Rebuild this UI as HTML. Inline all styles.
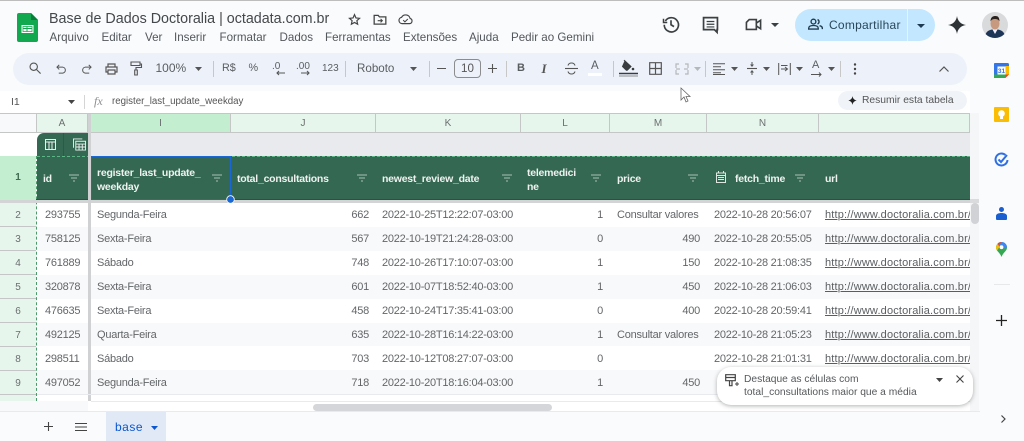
<!DOCTYPE html>
<html lang="pt-BR"><head><meta charset="utf-8"><title>Base de Dados Doctoralia</title>
<style>
*{box-sizing:border-box}
html,body{margin:0;padding:0}
body{width:1024px;height:441px;position:relative;overflow:hidden;background:#f9fbfd;font-family:"Liberation Sans",sans-serif;color:#444746}
.a{position:absolute;white-space:nowrap}
svg{position:absolute;overflow:visible}
.menu{top:29.500px;font-size:11.600px;color:#54575b;line-height:15px}
.tb{top:61px;font-size:11.500px;color:#5a5d60;line-height:15px}
.ch{top:113px;height:20px;background:#e6f6ec;border-right:1px solid #c4c7c5;border-bottom:1px solid #c4c7c5;text-align:center;font-size:10px;line-height:20px;color:#6b6e70}
.rh{left:0;width:36px;background:#e6f6ec;border-bottom:1px solid #c4c7c5;text-align:center;font-size:10px;color:#6b6e70;line-height:26px;height:24px}
.c{font-size:11px;letter-spacing:-.24px;color:#636669;line-height:16px}
.h{font-size:10.500px;letter-spacing:-.24px;font-weight:bold;color:#eef3f0;line-height:14px;top:172px}
.h2{top:165.500px;line-height:14px}
.u{text-decoration:underline;color:#5b5e61;width:145px;overflow:hidden;left:825px;letter-spacing:.17px}
.ri{text-align:right}
</style></head><body>
<div class="a" style="left:0;top:0;width:1024px;height:1px;background:#bdbdbd"></div>

<!-- logo -->
<svg style="left:17px;top:13px" width="21" height="29" viewBox="0 0 21 29"><path d="M2 0H14L21 7V27a2 2 0 0 1-2 2H2a2 2 0 0 1-2-2V2a2 2 0 0 1 2-2z" fill="#11a84f"/><path d="M14 0L21 7H14z" fill="#0b7d3a"/><path d="M4.500 12H16.500V20H4.500z" fill="#fff"/><path d="M10 13.500V18.500M6 15.500H15" stroke="#11a84f" stroke-width="1"/><path d="M6 13.500h9v5H6z" fill="none" stroke="#11a84f" stroke-width=".8"/></svg>

<div class="a" style="left:49px;top:10px;font-size:14.300px;line-height:18px;color:#45484b">Base de Dados Doctoralia | octadata.com.br</div>
<svg style="left:348px;top:13px" width="13" height="13" viewBox="0 0 24 24"><path d="M12 3l2.700 6.100 6.600.700-4.900 4.400 1.400 6.500L12 17.400l-5.800 3.300 1.400-6.500-4.900-4.400 6.600-.700z" fill="none" stroke="#444" stroke-width="2.200"/></svg>
<svg style="left:373px;top:13px" width="14" height="13" viewBox="0 0 24 22"><path d="M2 4h7l2 2.500h11V19H2z" fill="none" stroke="#444" stroke-width="2.200"/><path d="M8 13h8M13 10l3 3-3 3" fill="none" stroke="#444" stroke-width="1.800"/></svg>
<svg style="left:398px;top:13px" width="15" height="12" viewBox="0 0 26 20"><path d="M7 18a5.500 5.500 0 0 1-.8-10.900A8 8 0 0 1 21 9a4.600 4.600 0 0 1-1 9z" fill="none" stroke="#444" stroke-width="2"/><path d="M9 12l3 3 5-5" fill="none" stroke="#444" stroke-width="1.800"/></svg>

<div class="a menu" style="left:49.500px">Arquivo</div>
<div class="a menu" style="left:101.500px">Editar</div>
<div class="a menu" style="left:145px">Ver</div>
<div class="a menu" style="left:174px">Inserir</div>
<div class="a menu" style="left:219.500px">Formatar</div>
<div class="a menu" style="left:279.500px">Dados</div>
<div class="a menu" style="left:325px">Ferramentas</div>
<div class="a menu" style="left:403px">Extensões</div>
<div class="a menu" style="left:469px">Ajuda</div>
<div class="a menu" style="left:511px">Pedir ao Gemini</div>

<!-- top right -->
<svg style="left:662px;top:15px" width="18" height="18" viewBox="0 0 24 24" fill="none" stroke="#3c4043" stroke-width="2.200"><path d="M4.500 8A9.500 9.500 0 1 1 3 13"/><path d="M2 5v5h5" stroke-width="2"/><path d="M12 7v6l4 2.500"/></svg>
<svg style="left:702px;top:16px" width="17" height="18" viewBox="0 0 22 23" fill="none" stroke="#3c4043" stroke-width="2.200"><path d="M2 2h18v15.500h-.5V21l-3.500-3.500H2z"/><path d="M6 7h10M6 10.500h10M6 14h10" stroke-width="1.600"/></svg>
<svg style="left:745px;top:18px" width="17" height="13" viewBox="0 0 24 18" fill="none" stroke="#3c4043" stroke-width="2.300"><path d="M6 2h10v14H2V6z"/><path d="M16 7l6-4v12l-6-4"/></svg>
<svg style="left:771px;top:23px" width="8" height="4"><path d="M0 0h8L4 4z" fill="#3c4043"/></svg>

<div class="a" style="left:795px;top:9px;width:140px;height:32px;border-radius:16px;background:#c2e7ff"></div>
<div class="a" style="left:907px;top:9px;width:1px;height:32px;background:#e3f3ff"></div>
<svg style="left:808px;top:18px" width="15" height="12" viewBox="0 0 22 17" fill="none" stroke="#1f3a4f" stroke-width="2"><circle cx="8" cy="5" r="3.500"/><path d="M1 16v-1.500c0-2.500 3-3.800 7-3.800s7 1.300 7 3.800V16z"/><path d="M14 2a3.500 3.500 0 0 1 0 6.500M17 11c2.500.6 4 1.800 4 3.500V16"/></svg>
<div class="a" style="left:829px;top:17px;font-size:12px;line-height:16px;color:#2a4659;letter-spacing:.25px">Compartilhar</div>
<svg style="left:917px;top:24px" width="8" height="4"><path d="M0 0h8L4 4z" fill="#1c3a52"/></svg>

<svg style="left:948px;top:16px" width="18" height="18" viewBox="0 0 18 18"><path d="M9 0C9.600 5 13 8.400 18 9 13 9.600 9.600 13 9 18 8.400 13 5 9.600 0 9 5 8.400 8.400 5 9 0z" fill="#2d3236"/></svg>
<!-- avatar -->
<svg style="left:982px;top:12px" width="26" height="26" viewBox="0 0 26 26"><defs><clipPath id="av"><circle cx="13" cy="13" r="13"/></clipPath></defs><g clip-path="url(#av)"><rect width="26" height="26" fill="#d9dadb"/><path d="M3 26c0-6 3-7.500 7-8.500h6c4 1 7 2.500 7 8.500z" fill="#1d3557"/><path d="M10.500 17.500L13 22l2.500-4.500z" fill="#eef"/><ellipse cx="13" cy="11.500" rx="4.500" ry="6" fill="#c79a80"/><path d="M8.500 9.500C8.500 5 11 4 13.500 4s4 1.500 4 5.500c-1-2-2.500-2.500-4.500-2.500s-3.500 .5-4.500 2.500z" fill="#2a211d"/></g></svg>

<!-- toolbar -->
<div class="a" style="left:13px;top:53px;width:954px;height:32px;border-radius:16px;background:#edf2fa"></div>
<svg style="left:29px;top:62px" width="12" height="12" viewBox="0 0 14 14" fill="none" stroke="#555" stroke-width="1.300"><circle cx="5.500" cy="5.500" r="4.300"/><path d="M8.700 8.700L13.500 13.500"/></svg>
<svg style="left:56px;top:64px" width="11" height="10" viewBox="0 0 12 11" fill="none" stroke="#555" stroke-width="1.100"><path d="M1 3.500h6.500a3.300 3.300 0 0 1 0 6.500H3"/><path d="M3.500 1L1 3.500 3.500 6"/></svg>
<svg style="left:81px;top:64px" width="11" height="10" viewBox="0 0 12 11" fill="none" stroke="#555" stroke-width="1.100"><path d="M11 3.500H4.500a3.300 3.300 0 0 0 0 6.500H9"/><path d="M8.500 1L11 3.500 8.500 6"/></svg>
<svg style="left:105px;top:63px" width="13" height="12" viewBox="0 0 13 12" fill="none" stroke="#555" stroke-width="1.200"><path d="M3 4V1h7v3M3 9H1V4h11v5h-2M3 7h7v4H3z"/></svg>
<svg style="left:130px;top:61px" width="12" height="15" viewBox="0 0 12 15" fill="none" stroke="#555" stroke-width="1.100"><path d="M1 1h9v3.500H1zM10 3h1.500v3.500H6V9"/><path d="M4.700 9h2.600v5H4.700z"/></svg>
<div class="a tb" style="left:155.500px;font-size:12px">100%</div>
<svg style="left:195px;top:67px" width="7" height="4"><path d="M0 0h7L3.500 4z" fill="#555"/></svg>
<div class="a" style="left:213px;top:61px;width:1px;height:16px;background:#c7c7c7"></div>
<div class="a tb" style="left:222px;font-size:10.800px">R$</div>
<div class="a tb" style="left:248.500px;font-size:10.800px">%</div>
<div class="a tb" style="left:272px;top:59px;font-size:10px">.0</div>
<svg style="left:276px;top:70px" width="9" height="6"><path d="M9 3H1M3 1L1 3l2 2" fill="none" stroke="#555" stroke-width="1.100"/></svg>
<div class="a tb" style="left:296px;top:59px;font-size:10px">.00</div>
<svg style="left:301px;top:70px" width="9" height="6"><path d="M0 3h8M6 1l2 2-2 2" fill="none" stroke="#555" stroke-width="1.100"/></svg>
<div class="a tb" style="left:322px;font-size:10px">123</div>
<div class="a" style="left:345px;top:61px;width:1px;height:16px;background:#c7c7c7"></div>
<div class="a tb" style="left:357px;font-size:11.600px">Roboto</div>
<svg style="left:410px;top:67px" width="7" height="4"><path d="M0 0h7L3.500 4z" fill="#555"/></svg>
<div class="a" style="left:429px;top:61px;width:1px;height:16px;background:#c7c7c7"></div>
<div class="a" style="left:437px;top:68px;width:9px;height:1.300px;background:#555"></div>
<div class="a" style="left:454px;top:59px;width:27px;height:19px;border:1px solid #8a8c8e;border-radius:4px;font-size:11.600px;line-height:17px;text-align:center;color:#555">10</div>
<svg style="left:488px;top:64px" width="9" height="9"><path d="M4.500 0v9M0 4.500h9" stroke="#555" stroke-width="1.100"/></svg>
<div class="a" style="left:506px;top:61px;width:1px;height:16px;background:#c7c7c7"></div>

<div class="a tb" style="left:517px;font-size:11px;font-weight:bold">B</div>
<div class="a" style="left:541.500px;top:61px;font-size:13px;line-height:15px;font-family:'Liberation Serif',serif;font-style:italic;font-weight:bold;color:#555">I</div>
<svg style="left:565px;top:62px" width="13" height="13" viewBox="0 0 13 13" fill="none" stroke="#555" stroke-width="1.100"><path d="M0 6.500h13"/><path d="M10 3.500C9.500 1.800 8 1 6.500 1S3.500 1.800 3 3.500M3 9.500C3.500 11.200 5 12 6.500 12S9.500 11.200 10 9.500"/></svg>
<div class="a tb" style="left:591px;top:59px;font-size:11.500px">A</div>
<div class="a" style="left:588px;top:73px;width:14px;height:3px;background:#fff"></div>
<div class="a" style="left:613px;top:61px;width:1px;height:16px;background:#c7c7c7"></div>
<svg style="left:619px;top:60px" width="19" height="17" viewBox="0 0 19 17"><path d="M6 1l6 5.500-3.500 3.500a1 1 0 0 1-1.400 0L3.500 6.500z" fill="#3a3d40" stroke="#3a3d40"/><path d="M5 0l2 2.500" stroke="#3a3d40"/><circle cx="14" cy="9" r="1.300" fill="#3a3d40"/><path d="M0 13.500h19" stroke="#3a3d40" stroke-width="1.400"/><path d="M0 16h19" stroke="#8a8d90" stroke-width="1"/></svg>
<svg style="left:649px;top:62px" width="13" height="13" viewBox="0 0 13 13" fill="none" stroke="#555" stroke-width="1.200"><path d="M.7.700h11.600v11.600H.7zM6.500.700v11.600M.7 6.500h11.600"/></svg>
<svg style="left:675px;top:63px" width="14" height="12" viewBox="0 0 14 12" fill="none" stroke="#b5b8bb" stroke-width="1.200"><path d="M4 1H1v4M10 1h3v4M4 11H1V7M10 11h3V7"/><path d="M1 6h4M13 6H9"/></svg>
<svg style="left:694px;top:67px" width="7" height="4"><path d="M0 0h7L3.500 4z" fill="#b5b8bb"/></svg>
<div class="a" style="left:705px;top:61px;width:1px;height:16px;background:#c7c7c7"></div>
<svg style="left:713px;top:63px" width="12" height="12" viewBox="0 0 12 12"><path d="M0 .700h12M0 3.700h8M0 6.700h12M0 9.700h8M0 11.500h12" stroke="#555" stroke-width="1"/></svg>
<svg style="left:731px;top:67px" width="7" height="4"><path d="M0 0h7L3.500 4z" fill="#555"/></svg>
<svg style="left:747px;top:62px" width="10" height="13" viewBox="0 0 10 13"><path d="M0 6.500h10" stroke="#555" stroke-width="1.100"/><path d="M5 0v3M5 10v3" stroke="#555"/><path d="M3 2.500h4L5 5zM3 10.500h4L5 8z" fill="#555"/></svg>
<svg style="left:763px;top:67px" width="7" height="4"><path d="M0 0h7L3.500 4z" fill="#555"/></svg>
<svg style="left:778px;top:63px" width="13" height="12" viewBox="0 0 13 12" fill="none" stroke="#555" stroke-width="1"><path d="M.7 0v12M12.300 0v12M3 6h6M7 4l2.500 2L7 8"/><path d="M3 2.500h6.500"/></svg>
<svg style="left:796px;top:67px" width="7" height="4"><path d="M0 0h7L3.500 4z" fill="#555"/></svg>
<div class="a tb" style="left:812px;top:58px;font-size:11px">A</div>
<svg style="left:811px;top:72px" width="12" height="5"><path d="M0 2.500h10M8 .5l2 2-2 2" fill="none" stroke="#555" stroke-width="1"/></svg>
<svg style="left:828px;top:67px" width="7" height="4"><path d="M0 0h7L3.500 4z" fill="#555"/></svg>
<div class="a" style="left:840px;top:61px;width:1px;height:16px;background:#c7c7c7"></div>
<svg style="left:853px;top:63px" width="4" height="12"><circle cx="2" cy="1.500" r="1.200" fill="#444"/><circle cx="2" cy="6" r="1.200" fill="#444"/><circle cx="2" cy="10.500" r="1.200" fill="#444"/></svg>
<svg style="left:939px;top:66px" width="10" height="6"><path d="M.5 5.500L5 1l4.500 4.500" fill="none" stroke="#555" stroke-width="1.200"/></svg>

<!-- formula bar -->
<div class="a" style="left:0;top:91px;width:970px;height:22px;background:#fff"></div>
<div class="a" style="left:11px;top:95px;font-size:10.500px;line-height:14px;color:#555">I1</div>
<svg style="left:68px;top:100px" width="7" height="4"><path d="M0 0h7L3.500 4z" fill="#444"/></svg>
<div class="a" style="left:84px;top:95px;width:1px;height:14px;background:#d5d5d5"></div>
<div class="a" style="left:94px;top:94px;font-size:12px;line-height:15px;font-family:'Liberation Serif',serif;font-style:italic;color:#8a8d90">fx</div>
<div class="a" style="left:112px;top:95px;font-size:9.700px;line-height:14px;color:#555">register_last_update_weekday</div>
<div class="a" style="left:838px;top:91px;width:129px;height:19px;border-radius:10px;background:#f0f4f9"></div>
<svg style="left:848px;top:96px" width="9" height="9" viewBox="0 0 18 18"><path d="M9 0C9.600 5 13 8.400 18 9 13 9.600 9.600 13 9 18 8.400 13 5 9.600 0 9 5 8.400 8.400 5 9 0z" fill="#222"/></svg>
<div class="a" style="left:862px;top:94px;font-size:10.300px;line-height:14px;color:#555">Resumir esta tabela</div>
<svg style="left:680px;top:87px" width="11" height="16" viewBox="0 0 11 16"><path d="M1 1v12l3-3 2 5 2-1-2-4.500h4z" fill="#fff" stroke="#666" stroke-width=".8"/></svg>

<!-- grid -->
<div class="a" style="left:0;top:113px;width:970px;height:298px;background:#fff"></div>
<div class="a" style="left:0;top:113px;width:970px;height:1px;background:#c4c7c5"></div>
<div class="a" style="left:0;top:114px;width:37px;height:19px;background:#f8f9fa;border-right:1px solid #c4c7c5;border-bottom:1px solid #c4c7c5"></div>
<div class="a ch" style="left:37px;width:51px;top:114px;height:19px">A</div>
<div class="a ch" style="left:91px;width:140px;top:114px;height:19px;background:#c4eed0">I</div>
<div class="a ch" style="left:231px;width:145px;top:114px;height:19px">J</div>
<div class="a ch" style="left:376px;width:145px;top:114px;height:19px">K</div>
<div class="a ch" style="left:521px;width:89px;top:114px;height:19px">L</div>
<div class="a ch" style="left:610px;width:97px;top:114px;height:19px">M</div>
<div class="a ch" style="left:707px;width:112px;top:114px;height:19px">N</div>
<div class="a ch" style="left:819px;width:151px;top:114px;height:19px"></div>

<div class="a" style="left:91px;top:133px;width:879px;height:23px;background:#e8eaed"></div>
<div class="a" style="left:37px;top:133px;width:53px;height:23px;background:#356853;border-radius:7px 0 0 0"></div>
<div class="a" style="left:63px;top:133px;width:1px;height:23px;background:#2b5a46"></div>
<svg style="left:45px;top:139px" width="11" height="11" viewBox="0 0 11 11" fill="none" stroke="#e9f0ec" stroke-width="1"><path d="M.5.500h10v10H.5zM.5 3h10M4 3v7.500M7 3v7.500" /></svg>
<svg style="left:73px;top:138px" width="13" height="13" viewBox="0 0 14 13" fill="none" stroke="#e9f0ec" stroke-width="1"><path d="M.5 10V.5H10"/><path d="M3 3h10.500v9.500H3zM3 6h10.500M3 9.200h10.500M6.500 6v6.500M10 6v6.500" /></svg>

<!-- header row -->
<div class="a" style="left:0;top:156px;width:36px;height:44px;background:#c4eed0;text-align:center;font-size:10px;font-weight:bold;line-height:44px;color:#3f6b50">1</div>
<div class="a" style="left:37px;top:156px;width:933px;height:44px;background:#356853"></div>
<div class="a" style="left:37px;top:156px;width:933px;border-top:1px dashed #5bb585"></div>
<div class="a" style="left:36px;top:156px;height:245px;border-left:1px dashed #4a9a6a"></div>
<div class="a" style="left:36px;top:199px;width:934px;height:1px;background:#2b5140"></div>
<div class="a" style="left:0;top:200px;width:970px;height:3px;background:#d2d4d6"></div>
<div class="a" style="left:88px;top:114px;width:3px;height:287px;background:#cfd1d3"></div>
<div class="a" style="left:90.500px;top:156px;width:140.500px;height:43.500px;border:1.500px solid #1a68d6"></div>
<svg style="left:226px;top:195px" width="9" height="9"><circle cx="4.500" cy="4.500" r="3.800" fill="#1a68d6" stroke="#fff" stroke-width=".8"/></svg>

<div class="a h" style="left:43px">id</div>
<div class="a h h2" style="left:97px">register_last_update_<br>weekday</div>
<div class="a h" style="left:237px">total_consultations</div>
<div class="a h" style="left:382px">newest_review_date</div>
<div class="a h h2" style="left:527px">telemedici<br>ne</div>
<div class="a h" style="left:617px">price</div>
<div class="a h" style="left:735px">fetch_time</div>
<div class="a h" style="left:825px">url</div>
<svg style="left:716px;top:171px" width="10" height="12" viewBox="0 0 10 12" fill="none" stroke="#dfe7e2" stroke-width="1"><path d="M.5 2h9v9.500h-9zM.5 4.500h9M2.500 0v2M7.500 0v2M2 6.500h6M2 8.500h6"/></svg>
<svg style="left:0;top:0" width="1024" height="441"><g fill="none" stroke="#a9c1b4" stroke-width="1"><path d="M69 175h10M71 178h6M73 181h2"/><path d="M212 175h10M214 178h6M216 181h2"/><path d="M357 175h10M359 178h6M361 181h2"/><path d="M502 175h10M504 178h6M506 181h2"/><path d="M591 175h10M593 178h6M595 181h2"/><path d="M688 175h10M690 178h6M692 181h2"/><path d="M795 175h10M797 178h6M799 181h2"/></g></svg>

<!-- row backgrounds -->
<div class="a" style="left:37px;top:227px;width:51px;height:24px;background:#f8f9fa"></div><div class="a" style="left:91px;top:227px;width:879px;height:24px;background:#f8f9fa"></div>
<div class="a" style="left:37px;top:275px;width:51px;height:24px;background:#f8f9fa"></div><div class="a" style="left:91px;top:275px;width:879px;height:24px;background:#f8f9fa"></div>
<div class="a" style="left:37px;top:323px;width:51px;height:23px;background:#f8f9fa"></div><div class="a" style="left:91px;top:323px;width:879px;height:23px;background:#f8f9fa"></div>
<div class="a" style="left:37px;top:370px;width:51px;height:24px;background:#f8f9fa"></div><div class="a" style="left:91px;top:370px;width:879px;height:24px;background:#f8f9fa"></div>
<div class="a" style="left:37px;top:394px;width:933px;height:1px;background:#e8eaed"></div>

<!-- row heads -->
<div class="a" style="left:0;top:203px;width:36px;height:198px;background:#e6f6ec"></div>
<div class="a rh" style="top:203px">2</div>
<div class="a rh" style="top:227px">3</div>
<div class="a rh" style="top:251px">4</div>
<div class="a rh" style="top:275px">5</div>
<div class="a rh" style="top:299px">6</div>
<div class="a rh" style="top:323px">7</div>
<div class="a rh" style="top:347px">8</div>
<div class="a rh" style="top:371px">9</div>

<!-- rows -->
<div class="a c" style="left:45px;top:207px">293755</div><div class="a c" style="left:97px;top:207px">Segunda-Feira</div><div class="a c ri" style="right:655px;top:207px">662</div><div class="a c" style="left:382px;top:207px">2022-10-25T12:22:07-03:00</div><div class="a c ri" style="right:421px;top:207px">1</div><div class="a c" style="left:617px;top:207px">Consultar valores</div><div class="a c" style="left:714px;top:207px">2022-10-28 20:56:07</div><div class="a c u" style="top:207px">http://www.doctoralia.com.br/</div>
<div class="a c" style="left:45px;top:231px">758125</div><div class="a c" style="left:97px;top:231px">Sexta-Feira</div><div class="a c ri" style="right:655px;top:231px">567</div><div class="a c" style="left:382px;top:231px">2022-10-19T21:24:28-03:00</div><div class="a c ri" style="right:421px;top:231px">0</div><div class="a c ri" style="right:324px;top:231px">490</div><div class="a c" style="left:714px;top:231px">2022-10-28 20:55:05</div><div class="a c u" style="top:231px">http://www.doctoralia.com.br/</div>
<div class="a c" style="left:45px;top:255px">761889</div><div class="a c" style="left:97px;top:255px">Sábado</div><div class="a c ri" style="right:655px;top:255px">748</div><div class="a c" style="left:382px;top:255px">2022-10-26T17:10:07-03:00</div><div class="a c ri" style="right:421px;top:255px">1</div><div class="a c ri" style="right:324px;top:255px">150</div><div class="a c" style="left:714px;top:255px">2022-10-28 21:08:35</div><div class="a c u" style="top:255px">http://www.doctoralia.com.br/</div>
<div class="a c" style="left:45px;top:279px">320878</div><div class="a c" style="left:97px;top:279px">Sexta-Feira</div><div class="a c ri" style="right:655px;top:279px">601</div><div class="a c" style="left:382px;top:279px">2022-10-07T18:52:40-03:00</div><div class="a c ri" style="right:421px;top:279px">1</div><div class="a c ri" style="right:324px;top:279px">450</div><div class="a c" style="left:714px;top:279px">2022-10-28 21:06:03</div><div class="a c u" style="top:279px">http://www.doctoralia.com.br/</div>
<div class="a c" style="left:45px;top:303px">476635</div><div class="a c" style="left:97px;top:303px">Sexta-Feira</div><div class="a c ri" style="right:655px;top:303px">458</div><div class="a c" style="left:382px;top:303px">2022-10-24T17:35:41-03:00</div><div class="a c ri" style="right:421px;top:303px">0</div><div class="a c ri" style="right:324px;top:303px">400</div><div class="a c" style="left:714px;top:303px">2022-10-28 20:59:41</div><div class="a c u" style="top:303px">http://www.doctoralia.com.br/</div>
<div class="a c" style="left:45px;top:327px">492125</div><div class="a c" style="left:97px;top:327px">Quarta-Feira</div><div class="a c ri" style="right:655px;top:327px">635</div><div class="a c" style="left:382px;top:327px">2022-10-28T16:14:22-03:00</div><div class="a c ri" style="right:421px;top:327px">1</div><div class="a c" style="left:617px;top:327px">Consultar valores</div><div class="a c" style="left:714px;top:327px">2022-10-28 21:05:23</div><div class="a c u" style="top:327px">http://www.doctoralia.com.br/</div>
<div class="a c" style="left:45px;top:351px">298511</div><div class="a c" style="left:97px;top:351px">Sábado</div><div class="a c ri" style="right:655px;top:351px">703</div><div class="a c" style="left:382px;top:351px">2022-10-12T08:27:07-03:00</div><div class="a c ri" style="right:421px;top:351px">0</div><div class="a c" style="left:714px;top:351px">2022-10-28 21:01:31</div><div class="a c u" style="top:351px">http://www.doctoralia.com.br/</div>
<div class="a c" style="left:45px;top:375px">497052</div><div class="a c" style="left:97px;top:375px">Segunda-Feira</div><div class="a c ri" style="right:655px;top:375px">718</div><div class="a c" style="left:382px;top:375px">2022-10-20T18:16:04-03:00</div><div class="a c ri" style="right:421px;top:375px">1</div><div class="a c ri" style="right:324px;top:375px">450</div>

<!-- scrollbars -->
<div class="a" style="left:970px;top:113px;width:9px;height:298px;background:#f5f6f7"></div>
<div class="a" style="left:970px;top:199px;width:9px;height:4px;background:#d9dbdd"></div>
<div class="a" style="left:971px;top:203px;width:8px;height:21px;border-radius:4px;background:#d0d2d5"></div>
<div class="a" style="left:0;top:401px;width:88px;height:10px;background:#f8f9fa"></div>
<div class="a" style="left:91px;top:401px;width:879px;height:1px;background:#e8eaed"></div>
<div class="a" style="left:313px;top:404px;width:239px;height:7px;border-radius:4px;background:#d4d6d9"></div>
<div class="a" style="left:0;top:411px;width:980px;height:1px;background:#e8eaed"></div>

<!-- bottom bar -->
<div class="a" style="left:0;top:412px;width:1024px;height:29px;background:#f9fbfd"></div>
<svg style="left:44px;top:422px" width="9" height="9"><path d="M4.500 0v9M0 4.500h9" stroke="#444" stroke-width="1.100"/></svg>
<svg style="left:75px;top:423px" width="12" height="8"><path d="M0 .5h12M0 4h12M0 7.500h12" stroke="#444" stroke-width="1"/></svg>
<div class="a" style="left:106px;top:412px;width:60px;height:29px;background:#e1e9f7"></div>
<div class="a" style="left:115px;top:420px;font-size:12px;line-height:14px;letter-spacing:.5px;color:#0b57d0">base</div>
<svg style="left:151px;top:426px" width="7" height="4"><path d="M0 0h7L3.500 4z" fill="#0b57d0"/></svg>

<!-- popup -->
<div class="a" style="left:717px;top:367px;width:256px;height:38px;border-radius:14px;background:#fff;box-shadow:0 1px 4px rgba(60,64,67,.4)"></div>
<svg style="left:725px;top:374px" width="14" height="13" viewBox="0 0 14 13" fill="none" stroke="#444" stroke-width="1.200"><path d="M.7.700h9.600v6H.7zM4.500 6.700v5h2.500v-5M.7 3.500h9.600"/><path d="M10 10h4M12 8v4" stroke-width="1"/></svg>
<div class="a" style="left:744px;top:373px;font-size:10.250px;line-height:13px;color:#55585b">Destaque as células com</div>
<div class="a" style="left:744px;top:385.500px;font-size:10.250px;line-height:13px;color:#55585b">total_consultations maior que a média</div>
<svg style="left:936px;top:378px" width="7" height="4"><path d="M0 0h7L3.500 4z" fill="#444"/></svg>
<svg style="left:956px;top:375px" width="8" height="8"><path d="M.5.500l7 7M7.500.5l-7 7" stroke="#444" stroke-width="1.100"/></svg>
<svg style="left:1001px;top:415px" width="5" height="8"><path d="M.5.500L4 4 .5 7.500" fill="none" stroke="#444" stroke-width="1.200"/></svg>

<!-- side panel -->
<svg style="left:994px;top:63px" width="15" height="15" viewBox="0 0 15 15"><rect width="15" height="15" rx="1.500" fill="#fff"/><path d="M0 1.500A1.500 1.500 0 0 1 1.500 0H13.500A1.500 1.500 0 0 1 15 1.500V3.500H0z" fill="#3476e8"/><rect y="0" width="3.500" height="15" rx="1" fill="#3476e8"/><rect x="11.500" y="3" width="3.500" height="9" fill="#fbbc04"/><rect y="11.500" width="11.500" height="3.500" fill="#34a853"/><path d="M11.500 11.500H15L11.500 15z" fill="#ea4335"/><text x="7.500" y="10" font-size="6.500" font-weight="bold" text-anchor="middle" fill="#3476e8" font-family="Liberation Sans">31</text></svg>
<svg style="left:994px;top:107px" width="15" height="15" viewBox="0 0 15 15"><rect width="15" height="15" rx="1" fill="#fbbc04"/><circle cx="7.500" cy="6.500" r="3.300" fill="#fff"/><rect x="6" y="9.500" width="3" height="2.500" fill="#fff"/></svg>
<svg style="left:994px;top:152px" width="15" height="15" viewBox="0 0 15 15" fill="none" stroke="#2f6fe4" stroke-width="2"><path d="M11.500 3A6 6 0 1 0 13.500 8"/><path d="M4.500 7.500l2.500 2.500 6-7"/></svg>
<svg style="left:996px;top:207px" width="11" height="13" viewBox="0 0 11 13" fill="#1a5fd0"><circle cx="5.500" cy="2.500" r="2.500"/><path d="M0 12v-3C0 7 2.500 6 5.500 6S11 7 11 9v3a1 1 0 0 1-1 1H1a1 1 0 0 1-1-1z"/></svg>
<svg style="left:996px;top:242px" width="11" height="15" viewBox="0 0 11 15"><path d="M5.500 0A5.500 5.500 0 0 1 11 5.500C11 9 7 10.500 5.500 15 4 10.500 0 9 0 5.500A5.500 5.500 0 0 1 5.500 0z" fill="#34a853"/><path d="M1.500 1.700A5.500 5.500 0 0 1 5.500 0L3 3.800z" fill="#ea4335"/><path d="M5.500 0A5.500 5.500 0 0 1 11 5.500L8 6.500 3.500 2z" fill="#4285f4"/><path d="M0 5.500A5.500 5.500 0 0 1 1.500 1.700L3.500 5 1 8.500A5 5 0 0 1 0 5.500z" fill="#fbbc04"/><circle cx="5.500" cy="5.200" r="1.900" fill="#fff"/></svg>
<div class="a" style="left:994px;top:284px;width:16px;height:1px;background:#e6e8ea"></div>
<svg style="left:996px;top:315px" width="11" height="11"><path d="M5.500 0v11M0 5.500h11" stroke="#222" stroke-width="1.300"/></svg>
</body></html>
